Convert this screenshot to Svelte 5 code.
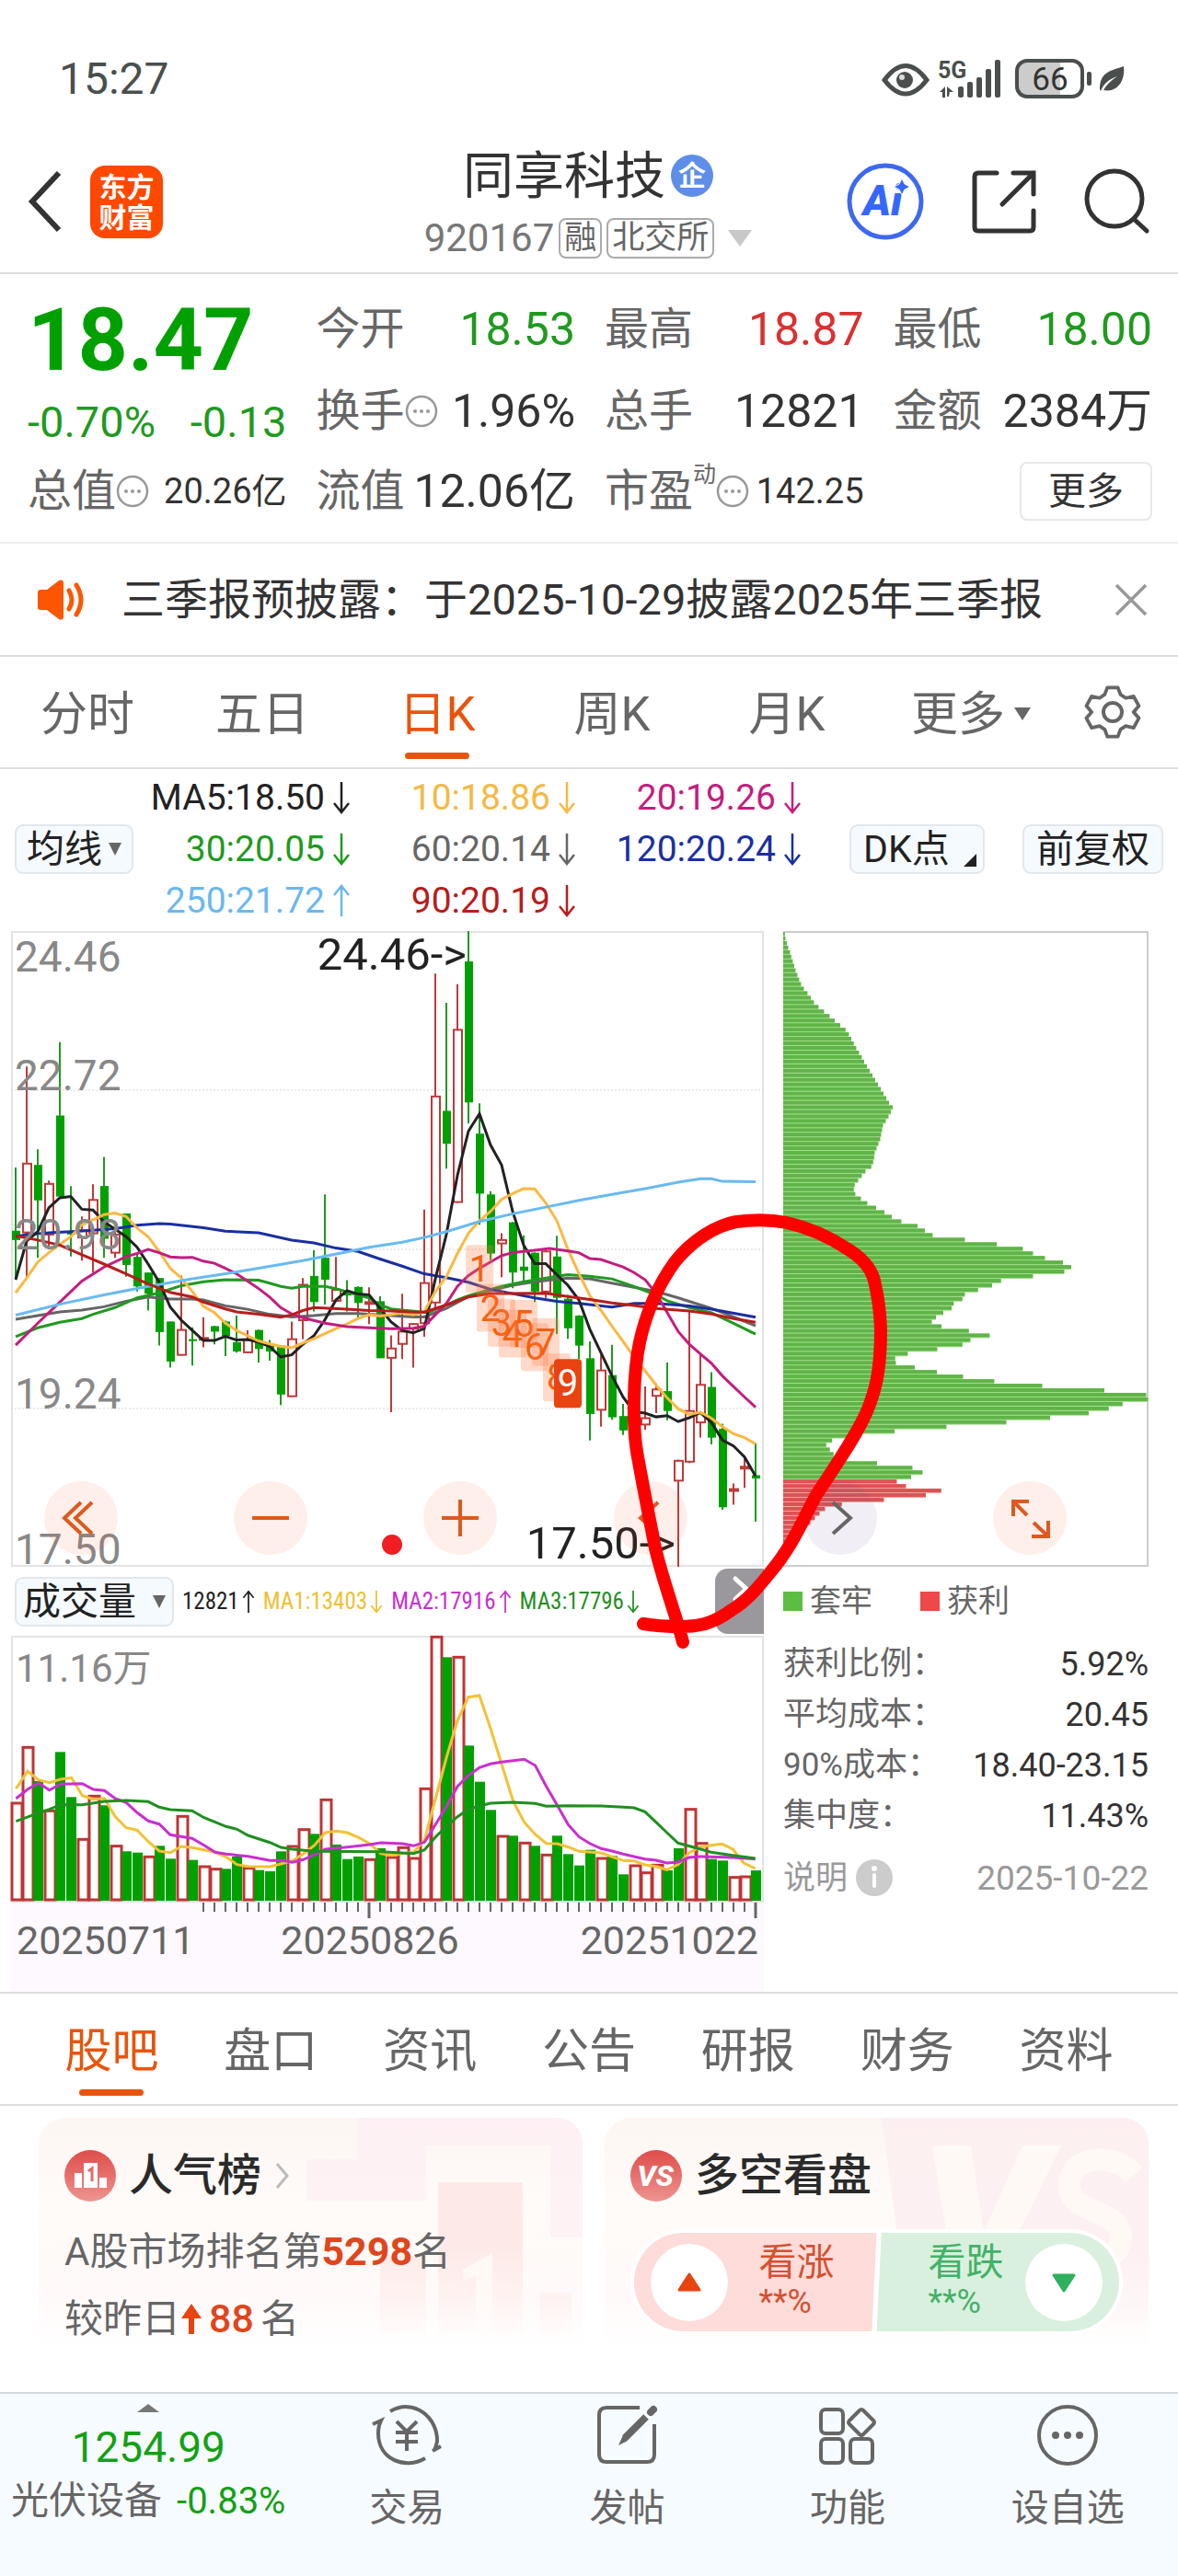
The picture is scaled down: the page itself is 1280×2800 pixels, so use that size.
<script lang="ts">
  type Candle = [dir: 'u' | 'd', high: number, low: number, top: number, bottom: number];

  const quotes = [
    { label: '今开', value: '18.53', tone: 'down' },
    { label: '最高', value: '18.87', tone: 'up' },
    { label: '最低', value: '18.00', tone: 'down' },
    { label: '换手', value: '1.96%', info: true },
    { label: '总手', value: '12821' },
    { label: '金额', value: '2384万' },
  ];

  const periods = ['分时', '五日', '日K', '周K', '月K'];
  let period = $state('日K');

  const averages = [
    { text: 'MA5:18.50', color: '#222', up: false },
    { text: '10:18.86', color: '#f5b944', up: false },
    { text: '20:19.26', color: '#c41d7f', up: false },
    { text: '30:20.05', color: '#1f9a1f', up: false },
    { text: '60:20.14', color: '#666', up: false },
    { text: '120:20.24', color: '#1a2fa0', up: false },
    { text: '250:21.72', color: '#6bb8ee', up: true },
    { text: '90:20.19', color: '#b81c1c', up: false },
  ];

  const volumeAverages = [
    { text: '12821', color: '#222', up: true },
    { text: 'MA1:13403', color: '#f0c030', up: false },
    { text: 'MA2:17916', color: '#c92fd0', up: true },
    { text: 'MA3:17796', color: '#1f8f1f', up: false },
  ];

  const costs = [
    ['获利比例：', '5.92%'],
    ['平均成本：', '20.45'],
    ['90%成本：', '18.40-23.15'],
    ['集中度：', '11.43%'],
  ];

  const sections = ['股吧', '盘口', '资讯', '公告', '研报', '财务', '资料'];
  let section = $state('股吧');

  // price chart: 68 days, 36 units apart, 26..1532 units from 24.46 down to 17.50
  const X = (u: number) => (u - 36) / 3;
  const Y = (v: number) => ((v - 26) * 691) / 1506;
  const VX = (u: number) => (u - 22) / 1.845;
  const VY = (v: number) => (v - 234) / 3;

  const toPoints = (s: string, fx: (n: number) => number, fy: (n: number) => number) =>
    s
      .split(' ')
      .map((p) => {
        const [a, b] = p.split(',').map(Number);
        return `${fx(a).toFixed(1)},${fy(b).toFixed(1)}`;
      })
      .join(' ');

  const candles: Candle[] = [
    ['d', 586, 850, 736, 758], ['u', 347, 850, 577, 740], ['d', 543, 800, 580, 664], ['u', 617, 780, 625, 745],
    ['d', 289, 655, 463, 655], ['d', 630, 797, 740, 745], ['u', 702, 807, 735, 752], ['u', 626, 835, 663, 742],
    ['d', 561, 800, 630, 755], ['u', 740, 800, 745, 788], ['d', 695, 845, 695, 817], ['d', 790, 880, 798, 868],
    ['d', 835, 925, 835, 885], ['d', 848, 1008, 848, 976], ['d', 951, 1060, 951, 1046], ['u', 842, 1032, 971, 1030],
    ['d', 965, 1055, 993, 996], ['u', 941, 1012, 990, 994], ['d', 961, 1005, 962, 975], ['d', 949, 1033, 951, 985],
    ['d', 937, 1025, 1000, 1022], ['u', 972, 1026, 995, 1024], ['d', 970, 1048, 971, 1016], ['d', 995, 1044, 1008, 1022],
    ['d', 1008, 1149, 1008, 1124], ['u', 951, 1130, 993, 1128], ['u', 848, 993, 864, 948], ['d', 782, 927, 843, 905],
    ['d', 650, 911, 800, 852], ['u', 798, 903, 876, 902], ['d', 853, 927, 885, 888], ['d', 868, 942, 869, 907],
    ['u', 870, 957, 905, 909], ['d', 891, 1038, 903, 1038], ['u', 984, 1166, 1015, 1037], ['u', 885, 1040, 975, 1004],
    ['u', 955, 1060, 957, 968], ['u', 686, 987, 860, 955], ['u', 127, 920, 418, 906], ['d', 196, 589, 452, 530],
    ['u', 152, 670, 260, 668], ['d', 26, 482, 98, 432], ['d', 434, 722, 506, 648], ['d', 642, 805, 650, 790],
    ['u', 742, 846, 758, 766], ['d', 715, 872, 716, 835], ['d', 747, 855, 821, 831], ['d', 787, 905, 788, 880],
    ['u', 783, 895, 785, 880], ['d', 748, 980, 797, 895], ['d', 888, 992, 897, 967], ['d', 936, 1040, 937, 1008],
    ['d', 998, 1233, 1038, 1170], ['u', 1030, 1200, 1067, 1160], ['d', 1006, 1184, 1078, 1178], ['d', 1146, 1220, 1175, 1209],
    ['u', 1150, 1215, 1170, 1200], ['u', 1105, 1207, 1180, 1195], ['u', 1098, 1168, 1112, 1127], ['d', 1048, 1185, 1116, 1163],
    ['u', 1278, 1532, 1281, 1328], ['u', 925, 1286, 1163, 1283], ['u', 1028, 1226, 1101, 1190], ['d', 1071, 1242, 1106, 1226],
    ['d', 1193, 1397, 1205, 1391], ['u', 1335, 1385, 1348, 1352], ['u', 1273, 1345, 1295, 1298], ['d', 1239, 1425, 1315, 1323],
  ];

  const lines = [
    { color: '#666', pts: '51,946 123,937 195,928 267,924 339,916 411,903 483,893 555,898 627,898 663,900 735,914 807,922 879,934 951,940 1023,937 1095,932 1167,932 1275,937 1347,940 1383,940 1455,920 1527,892 1599,878 1671,865 1743,857 1851,848 1923,850 1995,860 2067,870 2139,880 2211,895 2319,920 2391,940 2463,961' },
    { color: '#1f9a1f', pts: '51,987 123,966 195,953 267,944 303,934 375,918 447,895 519,883 591,866 663,857 735,852 843,853 879,860 915,868 951,872 987,868 1059,868 1095,873 1131,881 1167,888 1203,895 1239,912 1275,921 1311,924 1395,930 1455,912 1491,900 1527,890 1635,868 1707,857 1779,848 1851,840 1923,844 1995,850 2067,868 2139,888 2175,902 2247,918 2319,930 2391,955 2463,981' },
    { color: '#1a2fa0', pts: '51,750 87,745 159,741 231,738 303,735 375,731 447,723 519,719 555,720 663,729 735,737 843,741 951,758 1023,765 1095,777 1167,785 1239,803 1311,820 1383,838 1455,847 1527,858 1599,875 1671,885 1743,895 1815,903 1887,908 1995,917 2067,908 2139,908 2247,914 2319,922 2463,941' },
    { color: '#222', pts: '51,852 87,760 123,738 159,682 195,658 231,655 267,685 303,687 339,715 375,732 411,750 447,775 483,815 519,858 555,917 591,948 627,972 663,996 699,996 735,986 771,995 807,994 843,1000 879,1010 915,1035 951,1030 987,1005 1023,985 1059,947 1095,900 1131,878 1167,886 1203,888 1239,920 1275,952 1311,972 1347,978 1383,968 1419,850 1455,745 1491,605 1527,500 1563,459 1599,533 1635,580 1671,690 1707,770 1743,814 1779,814 1815,840 1851,865 1887,900 1923,970 1959,1025 1995,1080 2031,1130 2067,1165 2103,1168 2139,1177 2175,1174 2211,1188 2247,1179 2283,1167 2319,1190 2355,1232 2391,1246 2427,1272 2463,1317' },
    { color: '#fcb840', pts: '51,883 87,848 123,810 159,788 195,768 231,750 267,722 303,710 339,698 375,694 411,702 447,730 483,750 519,785 555,825 591,848 627,880 663,915 699,930 735,955 771,972 807,985 843,997 879,1004 915,1010 951,1013 987,1002 1023,992 1059,980 1095,968 1131,957 1167,944 1203,935 1239,938 1275,935 1311,930 1347,935 1383,928 1419,880 1455,845 1491,790 1527,742 1563,712 1599,690 1635,662 1671,648 1707,636 1743,637 1779,670 1815,712 1851,780 1887,837 1923,890 1959,925 1995,962 2031,998 2067,1035 2103,1068 2139,1102 2175,1132 2211,1158 2247,1171 2283,1166 2319,1180 2355,1200 2391,1217 2427,1226 2463,1241' },
    { color: '#c41d7f', pts: '51,1007 123,955 195,905 267,855 339,822 411,797 447,790 483,780 519,788 555,798 591,800 627,799 663,808 699,813 735,825 771,838 807,855 843,873 879,893 915,918 951,933 987,942 1059,955 1131,963 1203,966 1275,968 1347,967 1383,962 1419,935 1455,908 1491,868 1527,842 1563,825 1599,810 1635,795 1671,788 1743,782 1791,778 1851,784 1887,788 1923,802 1959,804 1995,813 2031,822 2067,835 2103,852 2139,885 2175,930 2211,975 2247,1005 2283,1028 2319,1050 2355,1080 2391,1105 2427,1130 2463,1154' },
    { color: '#68baf2', pts: '51,936 195,910 339,888 483,868 627,850 735,838 843,825 987,807 1131,786 1203,775 1311,763 1383,752 1455,738 1563,714 1671,696 1779,680 1887,664 1995,650 2103,636 2211,621 2283,613 2319,613 2355,619 2463,620' },
    { color: '#b81c1c', pts: '51,748 123,758 195,770 267,793 339,815 411,838 483,862 555,882 627,893 663,905 735,921 771,928 843,934 915,941 951,935 987,925 1023,918 1131,922 1203,925 1275,926 1347,929 1383,929 1455,912 1527,893 1599,885 1779,884 1851,892 1923,899 1995,907 2067,913 2139,920 2247,926 2319,933 2391,944 2463,953' },
  ];

  const countdown = [[1, 1563, 770], [2, 1599, 862], [3, 1635, 897], [4, 1671, 923], [5, 1707, 900], [6, 1743, 955], [7, 1779, 943], [8, 1815, 1027]];

  const volumes =
    'u780 u598 d708 u805 d613 d760 u898 u757 d787 u920 d937 d941 u955 d919 d961 u823 d965 u987 u995 d994 d954 u992 d998 d1002 d937 u921 u866 d880 u769 d915 d962 d954 u964 d927 u957 u925 u960 u733 u238 d304 u304 d592 d710 d802 u888 d886 u910 d919 u949 d886 d946 d983 d932 u960 d952 d1012 u984 u1007 u982 d999 d927 u800 u911 d962 d967 u1022 u1020 d999'
      .split(' ')
      .map((s) => ({ dir: s[0], top: VY(Number(s.slice(1))) }));

  const volumeLines = [
    { color: '#f2c233', pts: '32,733 55,676 77,704 99,713 121,702 143,697 165,755 187,767 209,764 231,824 253,860 275,868 297,905 319,936 341,941 363,921 385,925 409,932 431,940 453,955 475,980 497,986 541,987 563,978 586,968 608,945 630,918 652,876 674,871 696,876 719,892 741,912 763,944 785,950 807,944 829,940 851,900 873,765 895,630 917,510 939,434 961,429 983,535 1005,650 1029,775 1051,842 1073,882 1095,911 1117,912 1139,923 1161,937 1205,942 1249,967 1271,968 1293,981 1315,986 1337,997 1359,980 1381,942 1403,923 1425,917 1447,913 1469,930 1491,975 1514,993' },
    { color: '#c92fd0', pts: '32,765 55,735 77,714 99,737 121,718 165,716 187,735 209,739 231,765 253,778 275,811 297,838 319,848 341,883 385,895 409,917 431,940 453,946 497,953 541,967 563,966 586,973 608,964 630,948 652,930 696,923 741,915 763,909 807,912 829,919 851,907 873,850 895,790 917,725 939,690 961,664 983,652 1005,646 1051,637 1073,657 1095,725 1117,787 1139,850 1161,890 1183,912 1205,928 1227,936 1249,946 1293,962 1315,966 1337,975 1359,972 1381,957 1403,954 1469,957 1514,962' },
    { color: '#1f8f1f', pts: '32,839 77,812 99,800 121,785 165,785 209,774 253,771 297,775 319,793 341,801 385,805 409,827 453,856 475,865 497,885 541,908 563,924 586,930 630,937 763,938 829,944 851,932 873,890 895,855 917,824 939,800 961,789 983,780 1029,777 1073,781 1095,790 1139,788 1205,789 1249,793 1271,795 1293,808 1315,842 1337,876 1359,910 1403,929 1425,940 1469,950 1514,960' },
  ];

  const ticks = Array.from({ length: 51 }, (_, i) => i + 17);

  // chip distribution, one entry per price level from the top
  const trapped = [
    97, 99, 104, 108, 114, 118, 123, 128, 132, 138, 144, 150, 159, 171, 182, 192, 207, 225, 243, 260, 278, 295, 306, 314, 322,
    330, 339, 348, 356, 365, 374, 383, 392, 401, 410, 419, 428, 437, 449, 443, 435, 426, 417, 414, 411, 408, 402, 396, 390, 388,
    385, 379, 360, 348, 336, 325, 322, 327, 345, 366, 395, 422, 446, 477, 530, 554, 579, 684, 788, 873, 906, 945, 1004, 1031,
    1008, 906, 802, 773, 727, 684, 676, 648, 641, 614, 590, 576, 608, 697, 765, 702, 676, 594, 498, 457, 459, 521, 593, 678,
    780, 936, 1139, 1275, 1281, 1198, 1153, 1088, 962, 819, 624, 455, 305, 251, 232, 244, 256, 262, 398, 513, 546, 509,
  ];
  const profit = [462, 492, 607, 557, 420, 283, 228, 210, 195, 180, 165, 150, 138, 125, 112, 100];
  const chips = [...trapped, ...profit].map((end, i) => ({ width: (end - 92) / 3, y: 1 + i * 4.96, won: i >= trapped.length }));
</script>

{#snippet arrow(up: boolean)}
  <svg class="arrow" viewBox="0 0 20 36" aria-hidden="true">
    {#if up}
      <path d="M10 35V2M2 12L10 2l8 10" />
    {:else}
      <path d="M10 1v33M2 24l8 10 8-10" />
    {/if}
  </svg>
{/snippet}

{#snippet dots()}
  <svg class="dots" viewBox="0 0 36 36" aria-hidden="true">
    <circle cx="18" cy="18" r="16" fill="none" stroke="#999" stroke-width="2.5" />
    <circle cx="11" cy="18" r="2" /><circle cx="18" cy="18" r="2" /><circle cx="25" cy="18" r="2" />
  </svg>
{/snippet}

<div class="app">
  <div class="status">
    <span class="clock">15:27</span>
    <svg class="indicators" viewBox="0 0 264 44" aria-label="信号和电量">
      <g fill="#4a4f4d">
        <path d="M2 23Q25-8 48 23Q25 53 2 23Z" fill="none" stroke="#4a4f4d" stroke-width="5" />
        <circle cx="24" cy="23" r="9" />
        <circle cx="21" cy="20" r="3" fill="#fff" opacity=".8" />
        <text x="60" y="21" font-size="25" font-weight="700">5G</text>
        <path d="M62 36l6-6v12h-3v-6zM70 30l7 6-4 0v-1l0 0-1 6h-2z" />
        <rect x="82" y="30" width="6" height="12" rx="2" />
        <rect x="92" y="25" width="6" height="17" rx="2" />
        <rect x="102" y="20" width="6" height="22" rx="2" />
        <rect x="112" y="11" width="6" height="31" rx="2" />
        <rect x="122" y="1" width="6" height="41" rx="2" />
        <rect x="222" y="14" width="5" height="15" rx="2" />
        <path d="M236 33C236 14 248 13 262 8C264 24 255 37 240 34C244 27 249 23 255 19C246 22 240 27 237 35Z" />
      </g>
      <path d="M156 3h37v38h-37q-9 0-9-9V12q0-9 9-9Z" fill="#ccc" />
      <rect x="146" y="2" width="71" height="39" rx="11" fill="none" stroke="#4a4f4d" stroke-width="4" />
      <text x="182" y="34" font-size="35" text-anchor="middle" fill="#333">66</text>
    </svg>
  </div>

  <header>
    <div class="side">
      <button class="plain" aria-label="返回">
        <svg width="40" height="68" viewBox="0 0 40 68"><path d="M34 3L5 34l29 31" fill="none" stroke="#333" stroke-width="6" /></svg>
      </button>
      <a class="brand" href="#home">东方<br />财富</a>
    </div>
    <div class="title">
      <h1>同享科技<span class="corp">企</span></h1>
      <div class="code">920167<span class="tag">融</span><span class="tag">北交所</span><i class="tri pale"></i></div>
    </div>
    <div class="side tools">
      <button class="plain" aria-label="AI助手">
        <svg width="84" height="84" viewBox="0 0 84 84">
          <circle cx="42" cy="42" r="39" fill="none" stroke="#3d68f0" stroke-width="5" />
          <text x="39" y="57" class="ai">Ai</text>
          <path d="M60 17l3 6 6 3-6 3-3 6-3-6-6-3 6-3z" fill="#3567ff" stroke="#fff" stroke-width="1" />
        </svg>
      </button>
      <button class="plain" aria-label="分享">
        <svg width="70" height="70" viewBox="0 0 70 70" fill="none" stroke="#333" stroke-width="5" stroke-linecap="round">
          <path d="M27 4H7q-4 0-4 4v55q0 4 4 4h56q4 0 4-4V45M45 4h22v23M67 4L33 38" />
        </svg>
      </button>
      <button class="plain" aria-label="搜索">
        <svg width="70" height="70" viewBox="0 0 70 70" fill="none" stroke="#333" stroke-width="5" stroke-linecap="round">
          <circle cx="33" cy="32" r="30" /><path d="M54 54l14 13" />
        </svg>
      </button>
    </div>
  </header>

  <section class="quote">
    <div class="last">
      <strong>18.47</strong>
      <div class="change"><span>-0.70%</span><span>-0.13</span></div>
    </div>
    {#each quotes as q}
      <div class="cell">
        <span class="label">{q.label}{#if q.info}{@render dots()}{/if}</span>
        <span class="value {q.tone ?? ''}">{q.value}</span>
      </div>
    {/each}
    <div class="cell"><span class="label">总值{@render dots()}</span><span class="value small">20.26亿</span></div>
    <div class="cell"><span class="label">流值</span><span class="value">12.06亿</span></div>
    <div class="cell"><span class="label">市盈<sup>动</sup>{@render dots()}</span><span class="value small">142.25</span></div>
    <div class="cell end"><button class="more">更多</button></div>
  </section>

  <section class="notice">
    <svg width="54" height="44" viewBox="0 0 54 44" aria-hidden="true">
      <path d="M1 14q0-3 3-3h7L24 1q5-2 5 3v36q0 5-5 3L11 33H4q-3 0-3-3z" fill="#fe5600" />
      <path d="M35 12q6 10 0 20M43 6q10 16 0 32" fill="none" stroke="#fe5600" stroke-width="5" stroke-linecap="round" />
    </svg>
    <a href="#notice">三季报预披露：于2025-10-29披露2025年三季报</a>
    <button class="plain" aria-label="关闭">
      <svg width="36" height="36" viewBox="0 0 36 36"><path d="M2 2l32 32M34 2L2 34" stroke="#999" stroke-width="3.5" /></svg>
    </button>
  </section>

  <nav class="periods">
    {#each periods as p}
      <button class="tab" class:active={period === p} onclick={() => (period = p)}>{p}</button>
    {/each}
    <button class="tab">更多<i class="tri"></i></button>
    <button class="plain gear" aria-label="设置">
      <svg width="62" height="62" viewBox="0 0 62 62" fill="none" stroke="#666" stroke-width="4" stroke-linejoin="round">
        <path d="M25 3h12l3 8 6 4 9-2 6 11-6 7 6 7-6 11-9-2-6 4-3 8H25l-3-8-6-4-9 2-6-11 6-7-6-7 6-11 9 2 6-4z" transform="translate(1.5 1.5) scale(.95)" />
        <circle cx="31" cy="31" r="10" />
      </svg>
    </button>
  </nav>

  <section class="legend">
    <button class="chip">均线<i class="tri"></i></button>
    <div class="averages">
      {#each averages as a}
        <span style:color={a.color}>{a.text}{@render arrow(a.up)}</span>
      {/each}
    </div>
    <div class="switches">
      <button class="chip">DK点<i class="corner"></i></button>
      <button class="chip">前复权</button>
    </div>
  </section>

  <section class="charts">
    <div class="left">
      <svg class="plot" viewBox="0 0 818 691" role="img" aria-label="日K线">
        <rect x="1" y="1" width="816" height="689" fill="none" stroke="#e3e3e3" stroke-width="2" />
        {#each [173, 346, 519] as g}
          <line x1="0" x2="818" y1={g} y2={g} stroke="#d5d5d5" stroke-dasharray="2 2" />
        {/each}
        {#each candles as [dir, high, low, top, bottom], i}
          {@const cx = 5 + i * 12}
          {@const h = Math.max(Y(bottom) - Y(top), 2)}
          {#if dir === 'd'}
            <line x1={cx} x2={cx} y1={Y(high)} y2={Y(low)} stroke="#1f9a1f" stroke-width="2" />
            <rect x={cx - 4} y={Y(top)} width="9" height={h} fill="#00a000" />
          {:else}
            <path d="M{cx} {Y(high)}V{Y(top)}M{cx} {Y(bottom)}V{Y(low)}" stroke="#bf3a3a" stroke-width="2" />
            <rect x={cx - 4} y={Y(top)} width="9" height={h} fill="#fff" stroke="#bf3a3a" stroke-width="2" />
          {/if}
        {/each}
        {#each lines as l}
          <polyline points={toPoints(l.pts, X, Y)} fill="none" stroke={l.color} stroke-width="3" />
        {/each}
        <g class="count">
          {#each countdown as [n, u, v]}
            <rect x={X(u) - 15} y={Y(v)} width="30" height="52" rx="3" fill="#ff7a45" opacity=".28" />
            <text x={X(u)} y={Y(v) + 40}>{n}</text>
          {/each}
          <rect x={X(1851) - 15} y={Y(1040)} width="30" height="53" rx="4" fill="#e84310" />
          <text x={X(1851)} y={Y(1040) + 40} class="nine">9</text>
        </g>
        <g class="axis">
          <text x="4" y="44">24.46</text>
          <text x="4" y="173">22.72</text>
          <text x="4" y="346">20.98</text>
          <text x="4" y="519">19.24</text>
          <text x="4" y="688">17.50</text>
        </g>
        <g class="mark">
          <text x="495" y="42">24.46-&gt;</text>
          <text x="722" y="682">17.50-&gt;</text>
        </g>
        <circle cx="414" cy="667" r="11" fill="#f01d22" />
      </svg>

      <div class="volume-bar">
        <button class="chip">成交量<i class="tri"></i></button>
        {#each volumeAverages as a}
          <span style:color={a.color}>{a.text}{@render arrow(a.up)}</span>
        {/each}
        <button class="fold" aria-label="展开指标">
          <svg width="24" height="30" viewBox="0 0 24 30"><path d="M6 4l12 11L6 26" fill="none" stroke="#fff" stroke-width="5" stroke-linecap="round" /></svg>
        </button>
      </div>

      <svg class="plot" viewBox="0 0 818 387" role="img" aria-label="成交量">
        <rect y="289" width="818" height="98" fill="#fdf9fe" />
        <rect x="1" y="1" width="816" height="288" fill="none" stroke="#e3e3e3" stroke-width="2" />
        <text x="5" y="50" class="volume-max">11.16万</text>
        {#each volumes as v, i}
          {#if v.dir === 'd'}
            <rect x={i * 12} y={v.top} width="11" height={288 - v.top} fill="#00a000" />
          {:else}
            <rect x={i * 12 + 1} y={v.top} width="11" height={287 - v.top} fill="#fff" stroke="#bf3434" stroke-width="3" />
          {/if}
        {/each}
        {#each volumeLines as l}
          <polyline points={toPoints(l.pts, VX, VY)} fill="none" stroke={l.color} stroke-width="3" />
        {/each}
        {#each ticks as t}
          {@const major = t === 32 || t === 67}
          <line x1={5 + t * 12} x2={5 + t * 12} y1="290" y2={major ? 307 : 300} stroke="#666" stroke-width={major ? 3 : 2} />
        {/each}
        <g class="dates">
          <text x="6" y="346">20250711</text>
          <text x="390" y="346" text-anchor="middle">20250826</text>
          <text x="812" y="346" text-anchor="end">20251022</text>
        </g>
      </svg>
    </div>

    <div class="right">
      <svg class="plot" viewBox="0 0 397 691" role="img" aria-label="筹码分布">
        <rect x="1" y="1" width="395" height="689" fill="none" stroke="#ccc" stroke-width="2" />
        {#each chips as c}
          <rect x="0" y={c.y} width={c.width} height="5" fill={c.won ? '#f6a9a9' : '#a5e08e'} />
          <rect x="0" y={c.y} width={c.width} height="4" fill={c.won ? '#dc5252' : '#60b448'} />
        {/each}
      </svg>
      <div class="keys">
        <span><i class="lost"></i>套牢</span>
        <span><i class="won"></i>获利</span>
      </div>
      <dl>
        {#each costs as [k, v]}
          <div><dt>{k}</dt><dd>{v}</dd></div>
        {/each}
      </dl>
      <div class="note">
        <span>说明</span>
        <svg width="42" height="42" viewBox="0 0 42 42" aria-hidden="true">
          <circle cx="21" cy="21" r="20" fill="#ccc" />
          <path d="M21 18v12" stroke="#fff" stroke-width="4" stroke-linecap="round" /><circle cx="21" cy="11" r="3" fill="#fff" />
        </svg>
        <time>2025-10-22</time>
      </div>
    </div>

    <div class="controls">
      <button aria-label="最左"><svg viewBox="0 0 80 80"><path d="M40 23L22 40l18 17M52 23L34 40l18 17" /></svg></button>
      <button aria-label="缩小"><svg viewBox="0 0 80 80"><path d="M20 40h40" /></svg></button>
      <button aria-label="放大"><svg viewBox="0 0 80 80"><path d="M20 40h40M40 20v40" /></svg></button>
      <button aria-label="左移"><svg viewBox="0 0 80 80"><path d="M48 23L29 40l19 17" /></svg></button>
      <button class="grey" aria-label="右移"><svg viewBox="0 0 80 80"><path d="M32 23l19 17-19 17" /></svg></button>
      <button aria-label="全屏"><svg viewBox="0 0 80 80"><path d="M22 38V22h17M23 23l14 14M60 43v17H42M59 59L44 45" /></svg></button>
    </div>

    <svg class="scribble" viewBox="0 0 1280 800" aria-hidden="true">
      <path d="M742 775C735 747 722 714 712 673C705 637 698 602 692 568C687 537 688 482 695 449C702 417 715 387 733 362C752 338 778 322 800 318Q830 314 855 319Q890 327 920 347Q945 362 950 382Q956 407 957 435C957 482 951 502 942 524C930 552 905 587 887 615C870 647 860 672 837 699C825 714 812 730 795 740C780 751 765 758 742 758Q715 758 699 755" />
    </svg>
  </section>

  <nav class="sections">
    {#each sections as s}
      <button class="tab" class:active={section === s} onclick={() => (section = s)}>{s}</button>
    {/each}
  </nav>

  <section class="cards">
    <article class="rank">
      <svg class="ghost" viewBox="0 0 300 240" aria-hidden="true">
        <path d="M55 0h245v130h-35V30H130v60H0V45h55z" fill="#fdeef4" opacity=".7" />
        <path d="M143 70h92v180h-92zM80 150h50v90H80zM254 190h34v50h-34z" fill="#fdeae8" />
        <path d="M170 165l32-18v85h-18v-60l-14 6z" fill="#fff8f4" />
      </svg>
      <h2>
        <svg width="56" height="56" viewBox="0 0 56 56" aria-hidden="true">
          <circle cx="28" cy="28" r="28" fill="url(#red)" />
          <path d="M11 25h8v16h-8zM21 14h15v27H21zM38 30h8v11h-8z" fill="#fff" />
          <path d="M26 23l4-3v14" stroke="#e26a6a" stroke-width="3" fill="none" />
          <defs><linearGradient id="red" x2="0" y2="1"><stop stop-color="#de4d4a" /><stop offset="1" stop-color="#ee9490" /></linearGradient></defs>
        </svg>
        <a href="#rank">人气榜</a>
        <svg width="18" height="30" viewBox="0 0 18 30" aria-hidden="true"><path d="M3 2l11 13L3 28" fill="none" stroke="#bbb" stroke-width="3" /></svg>
      </h2>
      <p>A股市场排名第<b>5298</b>名</p>
      <p>
        较昨日<svg width="24" height="34" viewBox="0 0 24 34" aria-hidden="true"><path d="M12 0l11 16h-8v17H9V16H1z" fill="#e84310" /></svg>
        <b class="delta">88</b>名
      </p>
    </article>

    <article class="vote">
      <svg class="ghost" viewBox="0 0 300 240" aria-hidden="true">
        <path d="M10 0h290v240H190L30 150z" fill="#fdeef0" opacity=".8" />
        <path d="M65 30h42l14 95 42-95h42l-68 140H88z" fill="#fff9f5" />
        <path d="M284 62C262 36 212 40 214 76C216 106 272 98 270 132C268 160 222 162 196 140" fill="none" stroke="#fff9f5" stroke-width="24" />
      </svg>
      <h2>
        <svg width="56" height="56" viewBox="0 0 56 56" aria-hidden="true">
          <circle cx="28" cy="28" r="28" fill="url(#red)" />
          <text x="27" y="39" text-anchor="middle" font-size="32" font-weight="800" font-style="italic" fill="#fff">VS</text>
        </svg>
        多空看盘
      </h2>
      <div class="poll">
        <button class="bull">
          <span class="disc"><svg width="28" height="22" viewBox="0 0 28 22"><path d="M14 2l11 17H3z" fill="#e84310" stroke="#e84310" stroke-width="3" stroke-linejoin="round" /></svg></span>
          <span>看涨<small>**%</small></span>
        </button>
        <button class="bear">
          <span>看跌<small>**%</small></span>
          <span class="disc"><svg width="28" height="22" viewBox="0 0 28 22"><path d="M14 20L3 3h22z" fill="#2fb05c" stroke="#2fb05c" stroke-width="3" stroke-linejoin="round" /></svg></span>
        </button>
      </div>
    </article>
  </section>

  <footer>
    <a class="sector" href="#sector">
      <i class="tri flip"></i>
      <span class="index">1254.99</span>
      <span class="name">光伏设备<em>-0.83%</em></span>
    </a>
    <a href="#trade">
      <svg viewBox="0 0 76 68">
        <path d="M20 8C46-7 72 15 71 41l-3 10M66 51l9-5M58 59C36 72 7 60 7 32q0-8 3-14L1 22" />
        <path d="M27 19l11 11 11-11M38 30v21M26 31h24M26 41h24" />
      </svg>
      交易
    </a>
    <a href="#post">
      <svg viewBox="0 0 76 68">
        <path d="M51 4H15q-8 0-8 8v43q0 8 8 8h44q8 0 8-8V22" />
        <path d="M58 14L35 37" stroke-width="8" /><path d="M33 34l-5 11 10-5z" fill="#666" stroke="none" /><path d="M63 9l3-3" stroke-width="8" stroke-linecap="round" />
      </svg>
      发帖
    </a>
    <a href="#tools">
      <svg viewBox="0 0 76 68">
        <rect x="9" y="6" width="24" height="26" rx="5" /><rect x="9" y="38" width="24" height="26" rx="5" /><rect x="41" y="38" width="24" height="26" rx="5" />
        <path d="M51 7q2-2 4 0l11 11q2 2 0 4L55 33q-2 2-4 0L40 22q-2-2 0-4z" />
      </svg>
      功能
    </a>
    <a href="#watch">
      <svg viewBox="0 0 76 68">
        <circle cx="38" cy="34" r="31" />
        <g fill="#666" stroke="none"><circle cx="25" cy="34" r="4" /><circle cx="38" cy="34" r="4" /><circle cx="51" cy="34" r="4" /></g>
      </svg>
      设自选
    </a>
  </footer>
</div>

<style>
  :global(body) { background: #fff; }

  .app {
    min-height: 100vh;
    display: flex;
    flex-direction: column;
    font-family: Roboto, "Noto Sans CJK SC", sans-serif;
    color: #333;
    line-height: 1;
    white-space: nowrap;
  }
  .app :is(button) { font: inherit; color: inherit; cursor: pointer; }
  .app :is(a) { color: inherit; text-decoration: none; }
  svg { display: block; flex: none; overflow: visible; }

  .plain { border: 0; padding: 0; background: none; }
  .tri {
    border: 7px solid transparent;
    border-top: 14px solid #666;
    border-bottom: 0;
    flex: none;
  }
  .tri.pale { border-width: 18px 13px 0; border-top-color: #c8c8c8; margin-left: 10px; }
  .tri.flip { border-width: 0 12px 9px; border-bottom: 9px solid #777; }
  .dots { display: inline-block; width: 36px; height: 36px; fill: #999; }
  .arrow {
    display: inline-block;
    width: 20px;
    height: 36px;
    fill: none;
    stroke: currentColor;
    stroke-width: 2.5;
  }

  .status {
    display: flex;
    align-items: center;
    justify-content: space-between;
    height: 52px;
    padding: 60px 57px 24px 64px;
  }
  .clock { font-size: 48px; color: #4a4f4d; }
  .indicators { width: 264px; height: 44px; }

  header {
    display: grid;
    grid-template-columns: 1fr auto 1fr;
    align-items: center;
    height: 162px;
    box-sizing: border-box;
    padding: 6px 32px 0 30px;
    border-bottom: 2px solid #dcdcdc;
  }
  .side { display: flex; align-items: center; gap: 28px; }
  .brand {
    width: 79px;
    height: 79px;
    box-sizing: border-box;
    padding-top: 7px;
    border-radius: 16px;
    background: #ff4800;
    font-size: 30px;
    line-height: 33px;
    font-weight: 700;
    text-align: center;
  }
  .side .brand { color: #fff; }
  .tools { justify-content: flex-end; gap: 52px; }
  .ai { font-size: 46px; font-weight: 900; font-style: italic; text-anchor: middle; fill: #3567ff; }
  .title { display: flex; flex-direction: column; align-items: center; gap: 18px; padding-top: 6px; }
  h1 { display: flex; align-items: center; gap: 6px; margin: 0; font-size: 55px; font-weight: 400; }
  .corp {
    width: 46px;
    border-radius: 50%;
    background: #5e8ee8;
    color: #fff;
    font-size: 30px;
    line-height: 46px;
    font-weight: 700;
    text-align: center;
  }
  .code { display: flex; align-items: center; gap: 5px; font-size: 42px; color: #777; }
  .tag { border: 2px solid #aaa; border-radius: 8px; padding: 0 4px; font-size: 35px; line-height: 40px; color: #666; }

  .quote {
    display: grid;
    grid-template-columns: repeat(4, 1fr);
    grid-template-rows: 88px 90px 84px;
    column-gap: 32px;
    padding: 16px 28px 13px 30px;
    border-bottom: 2px solid #ededed;
  }
  .last {
    grid-row: span 2;
    color: #00a000;
    display: flex;
    flex-direction: column;
    gap: 18px;
    padding-top: 8px;
  }
  .last strong { font-size: 95px; font-weight: 700; }
  .change { display: flex; justify-content: space-between; font-size: 47px; color: #1f9a1f; }
  .cell { display: flex; align-items: center; justify-content: space-between; }
  .cell.end { justify-content: flex-end; }
  .label { display: flex; align-items: center; font-size: 48px; color: #666; }
  .label sup { align-self: flex-start; font-size: 25px; line-height: 12px; }
  .value { font-size: 50px; }
  .value.small { font-size: 38px; }
  .up { color: #d93030; }
  .down { color: #1f9a1f; }
  .more {
    padding: 0 29px;
    border: 2px solid #e8e8e8;
    border-radius: 8px;
    background: #fff;
  }
  .cell .more { font-size: 41px; line-height: 60px; }

  .notice {
    display: flex;
    align-items: center;
    gap: 38px;
    height: 121px;
    padding: 0 33px 0 40px;
    border-bottom: 2px solid #dcdcdc;
    font-size: 47px;
  }
  .notice a { flex: 1; }

  .tab {
    position: relative;
    display: flex;
    align-items: center;
    justify-content: center;
    gap: 10px;
    border: 0;
    padding: 4px 0 0;
    background: none;
  }
  .app .tab { font-size: 51px; color: #666; }
  .app .tab.active { color: #e8540c; }
  .tab.active::after {
    content: '';
    position: absolute;
    bottom: 9px;
    width: 70px;
    height: 7px;
    border-radius: 4px;
    background: #e8540c;
  }
  .tab .tri { border-width: 14px 9px 0; }

  .periods {
    display: grid;
    grid-template-columns: repeat(5, 190fr) 210fr 98fr;
    height: 120px;
    padding-right: 22px;
    border-bottom: 2px solid #dcdcdc;
  }
  .gear { display: grid; place-items: center; }

  .legend {
    display: flex;
    align-items: center;
    height: 174px;
    padding: 0 16px;
  }
  .chip {
    display: flex;
    align-items: center;
    gap: 7px;
    padding: 0 11px;
    border: 2px solid #e2e7ec;
    border-radius: 9px;
    background: #f5faff;
  }
  .app .chip { font-size: 41px; line-height: 50px; color: #222; }
  .averages {
    display: grid;
    grid-template-columns: 236px 245px 245px;
    grid-auto-rows: 56px;
    align-items: center;
    font-size: 39px;
  }
  .averages span { display: flex; align-items: center; justify-content: flex-end; gap: 8px; }
  .switches { display: flex; flex: 1; justify-content: space-between; padding-left: 52px; }
  .switches .chip { padding: 0 13px; }
  .corner { align-self: flex-end; margin: 0 -6px 6px 8px; border: 7px solid #222; border-top-color: transparent; border-left-color: transparent; }

  .charts {
    position: relative;
    display: grid;
    grid-template-columns: 818fr 397fr;
    column-gap: 21px;
    padding: 2px 32px 0 12px;
  }
  .plot { width: 100%; height: auto; }
  .axis { font-size: 46px; fill: #888; }
  .mark { font-size: 49px; fill: #222; text-anchor: end; }
  .count { font-size: 40px; text-anchor: middle; fill: #f5600f; }
  .nine { fill: #fff; }
  .volume-max { font-size: 42px; fill: #888; }
  .dates { font-size: 43px; fill: #666; }

  .volume-bar { display: flex; align-items: center; gap: 9px; height: 75px; padding-left: 4px; }
  .volume-bar span {
    display: flex;
    align-items: center;
    gap: 3px;
    font-family: "Roboto Condensed", "Liberation Sans Narrow", Roboto, sans-serif;
    font-size: 25px;
  }
  .volume-bar .arrow { width: 14px; height: 34px; }
  .volume-bar .chip { padding: 0 7px; gap: 18px; }
  .fold {
    margin-left: auto;
    width: 53px;
    height: 71px;
    border: 0;
    padding: 0 0 28px 16px;
    border-radius: 14px 0 0 14px;
    background: #9a989c;
  }

  .keys { display: flex; gap: 52px; height: 74px; align-items: center; font-size: 34px; color: #666; }
  .keys span { display: flex; align-items: center; gap: 8px; }
  .keys i { width: 21px; height: 21px; }
  .lost { background: #5bbd42; }
  .won { background: #ee4848; }
  dl { margin: 4px 0 0; font-size: 36px; }
  dl div { display: flex; align-items: center; justify-content: space-between; height: 55px; }
  dt { color: #666; font-size: 35px; }
  dd { margin: 0; }
  .note { display: flex; align-items: center; gap: 8px; height: 80px; font-size: 35px; color: #999; }
  .note time { margin-left: auto; font-size: 37px; }

  .controls {
    position: absolute;
    top: 600px;
    left: 48px;
    right: 121px;
    display: flex;
    justify-content: space-between;
  }
  .controls button { width: 80px; height: 80px; border: 0; padding: 0; border-radius: 50%; background: rgba(255, 80, 30, 0.09); }
  .controls button.grey { background: rgba(120, 90, 160, 0.1); }
  .controls svg { fill: none; stroke: #dc5a1e; stroke-width: 4; }
  .controls .grey svg { stroke: #666; }
  .scribble { position: absolute; top: 0; left: 0; width: 100%; pointer-events: none; }
  .scribble path { fill: none; stroke: #fe0000; stroke-width: 14; stroke-linecap: round; stroke-linejoin: round; }

  .sections {
    display: grid;
    grid-template-columns: repeat(7, 1fr);
    height: 120px;
    padding: 0 35px;
    border-top: 2px solid #dcdcdc;
    border-bottom: 2px solid #dcdcdc;
  }

  .cards { display: grid; grid-template-columns: 1fr 1fr; gap: 24px; padding: 13px 32px 0 42px; }
  article {
    position: relative;
    overflow: hidden;
    height: 265px;
    border-radius: 28px;
    padding: 33px 28px 0;
    background: linear-gradient(#fdf6f3, #fffbf8 30%, #fffaf9 65%, #fff 85%);
  }
  article > :not(.ghost) { position: relative; }
  .ghost {
    position: absolute;
    top: 0;
    right: 0;
    height: 240px;
    mask-image: linear-gradient(#000 60%, transparent);
  }
  h2 { display: flex; align-items: center; gap: 14px; margin: 0; font-size: 48px; line-height: 60px; font-weight: 500; }
  .rank { color: #666; }
  h2, .rank a { color: #2a2a2a; }
  .rank p { display: flex; align-items: center; margin: 0; height: 73px; font-size: 42px; }
  .rank h2 + p { margin-top: 16px; }
  .rank b { font-size: 43px; color: #e0461c; }
  .rank .delta { margin: 0 7px; font-weight: 500; }
  .poll {
    display: grid;
    grid-template-columns: 1fr 1fr;
    margin-top: 28px;
    height: 107px;
    border: 4px solid #fff;
    border-radius: 60px;
    overflow: hidden;
    background: #fff;
  }
  .poll button { display: flex; align-items: center; justify-content: space-between; border: 0; padding: 0 46px 0 18px; line-height: 43px; }
  .app .poll button { font-size: 41px; text-align: left; }
  .poll small { display: block; font-size: 36px; }
  .poll .bull { background: #fddcda; clip-path: polygon(0 0, 100% 0, 98% 100%, 0 100%); }
  .poll .bear { background: #daf0de; padding: 0 18px 0 56px; clip-path: polygon(2% 0, 100% 0, 100% 100%, 0 100%); }
  .app .bull { color: #d6502e; }
  .app .bear { color: #42b268; }
  .disc { display: grid; place-items: center; width: 84px; height: 84px; border-radius: 50%; background: #fff; }

  footer {
    display: grid;
    grid-template-columns: 322fr 239fr 239fr 239fr 239fr;
    flex: 1;
    border-top: 2px solid #d5dade;
    background: #f6fbff;
    font-size: 41px;
  }
  footer a { display: flex; flex-direction: column; align-items: center; gap: 25px; padding-top: 11px; }
  .app footer a { color: #666; }
  footer svg { width: 76px; height: 68px; fill: none; stroke: #666; stroke-width: 4; }
  footer .sector { gap: 12px; }
  .index { font-size: 46px; line-height: 52px; color: #14a014; }
  .name em { margin-left: 16px; font-style: normal; font-size: 40px; color: #14a014; }
</style>
